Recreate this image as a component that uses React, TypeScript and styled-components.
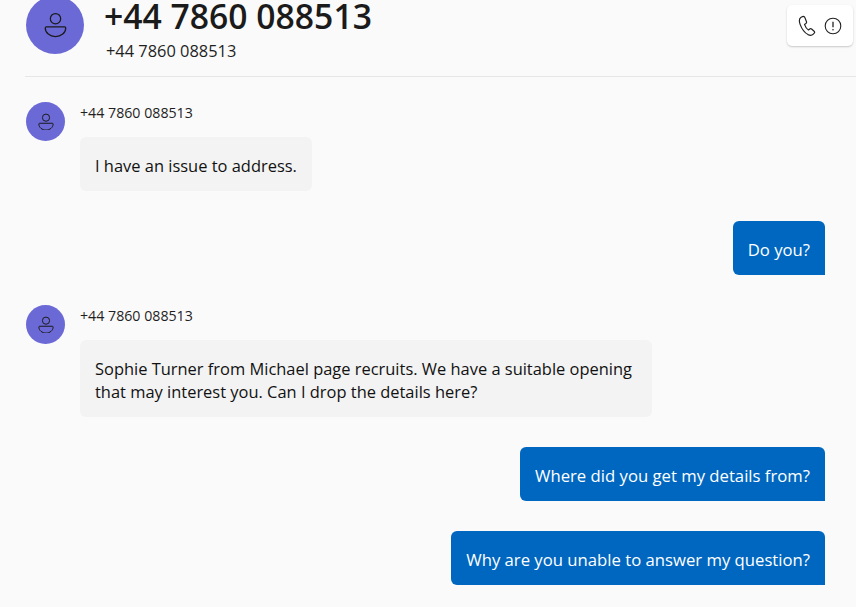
import styled, { createGlobalStyle } from "styled-components";

const GlobalStyle = createGlobalStyle`
  html, body {
    margin: 0;
    padding: 0;
    height: 100%;
    overflow: hidden;
    background: #fafafa;
  }
  * { box-sizing: border-box; }
`;

const Page = styled.div`
  width: 856px;
  height: 607px;
  overflow: hidden;
  background: #fafafa;
  color: #1a1a1a;
  font-family: "Open Sans", "Noto Sans", sans-serif;
`;

const Header = styled.header`
  display: flex;
  align-items: flex-start;
  height: 82px;
  margin: -5px 0 0 25px;
  padding: 1px 3px 0 1px;
  border-bottom: 1px solid #e6e6e6;
`;

const Titles = styled.div`
  display: flex;
  flex-direction: column;
  margin: 4px 0 0 20px;
`;

const Title = styled.h1`
  margin: 0;
  font-size: 33.7px;
  line-height: 32px;
  font-weight: 600;
  color: #1b1b1b;
`;

const Subtitle = styled.div`
  margin: 8px 0 0 2px;
  font-size: 16.4px;
  line-height: 22px;
  color: #1f1f1f;
`;

const Actions = styled.div`
  display: flex;
  align-items: center;
  gap: 8px;
  width: 66px;
  height: 41px;
  margin: 9px 0 0 auto;
  padding-left: 11px;
  background: #fff;
  border-radius: 5px;
  box-shadow: 0 1px 2px rgba(0, 0, 0, 0.2);
`;

const Avatar = styled.div<{ $size: number }>`
  display: flex;
  align-items: center;
  justify-content: center;
  flex: none;
  width: ${(p) => p.$size}px;
  height: ${(p) => p.$size}px;
  border-radius: 50%;
  background: #6b69d6;
`;

const Thread = styled.main`
  display: flex;
  flex-direction: column;
  gap: 30px;
  padding: 25px 31px 0 26px;
`;

const Incoming = styled.section`
  display: flex;
  gap: 15px;
`;

const IncomingBody = styled.div`
  display: flex;
  flex-direction: column;
  align-items: flex-start;
`;

const Sender = styled.div`
  height: 35px;
  font-size: 14.2px;
  line-height: 22px;
  color: #1f1f1f;
`;

const Bubble = styled.div`
  padding: 17px 15px 14px;
  max-width: 572px;
  font-size: 16.45px;
  line-height: 23px;
  border-radius: 6px;
  background: #f3f3f3;
  color: #111;
`;

const Outgoing = styled(Bubble)`
  align-self: flex-end;
  font-size: 16.7px;
  border-radius: 6px 6px 0 6px;
  background: #0067c0;
  color: #fff;
`;

function PersonIcon({ size, stroke }: { size: number; stroke: number }) {
  return (
    <svg width={size} height={size * 1.1} viewBox="0 0 24 26.400" fill="none" stroke="#1a1a1a" strokeWidth={stroke}>
      <circle cx="12" cy="7" r="5.400" />
      <path
        d="M2.500 15.400h19a1.200 1.200 0 0 1 1.200 1.200c0 5-4.800 9-10.700 9S1.300 21.600 1.300 16.600a1.200 1.200 0 0 1 1.200-1.200z"
        strokeLinejoin="round"
      />
    </svg>
  );
}

function PhoneIcon() {
  return (
    <svg width="18" height="22" viewBox="0 0 18 22" fill="none" stroke="#222" strokeWidth="1.2" strokeLinejoin="round">
      <path d="M4.600 1.600 2.800 2.600C1.200 3.800 1 6.400 2.200 9.600c1.600 4.200 4.200 8 7.800 10 2 1 3.800 1 5-.2l1.200-1.200c.6-.7.5-1.400-.1-2l-2.500-2.200c-.6-.5-1.300-.5-1.900 0l-1.200 1c-1.600-.9-3.200-3.200-4-5.600l1.300-.8c.7-.5.9-1.200.7-1.900L6.900 2.600C6.500 1.600 5.500 1.200 4.600 1.600z" />
    </svg>
  );
}

function AlertIcon() {
  return (
    <svg width="18" height="18" viewBox="0 0 18 18" fill="none" stroke="#222" strokeWidth="1.1">
      <circle cx="9" cy="9" r="7.800" />
      <path d="M9 4.800v5.400" strokeWidth="1.300" />
      <circle cx="9" cy="12.700" r="0.800" fill="#222" stroke="none" />
    </svg>
  );
}

const PHONE = "+44 7860 088513";

function Received({ children }: { children: React.ReactNode }) {
  return (
    <Incoming>
      <Avatar $size={39}>
        <PersonIcon size={16} stroke={1.5} />
      </Avatar>
      <IncomingBody>
        <Sender>{PHONE}</Sender>
        <Bubble>{children}</Bubble>
      </IncomingBody>
    </Incoming>
  );
}

export default function App() {
  return (
    <Page>
      <GlobalStyle />
      <Header>
        <Avatar $size={58}>
          <PersonIcon size={23} stroke={1.3} />
        </Avatar>
        <Titles>
          <Title>{PHONE}</Title>
          <Subtitle>{PHONE}</Subtitle>
        </Titles>
        <Actions>
          <PhoneIcon />
          <AlertIcon />
        </Actions>
      </Header>
      <Thread>
        <Received>I have an issue to address.</Received>
        <Outgoing>Do you?</Outgoing>
        <Received>
          Sophie Turner from Michael page recruits. We have a suitable opening that may interest you. Can I drop the
          details here?
        </Received>
        <Outgoing>Where did you get my details from?</Outgoing>
        <Outgoing>Why are you unable to answer my question?</Outgoing>
      </Thread>
    </Page>
  );
}
